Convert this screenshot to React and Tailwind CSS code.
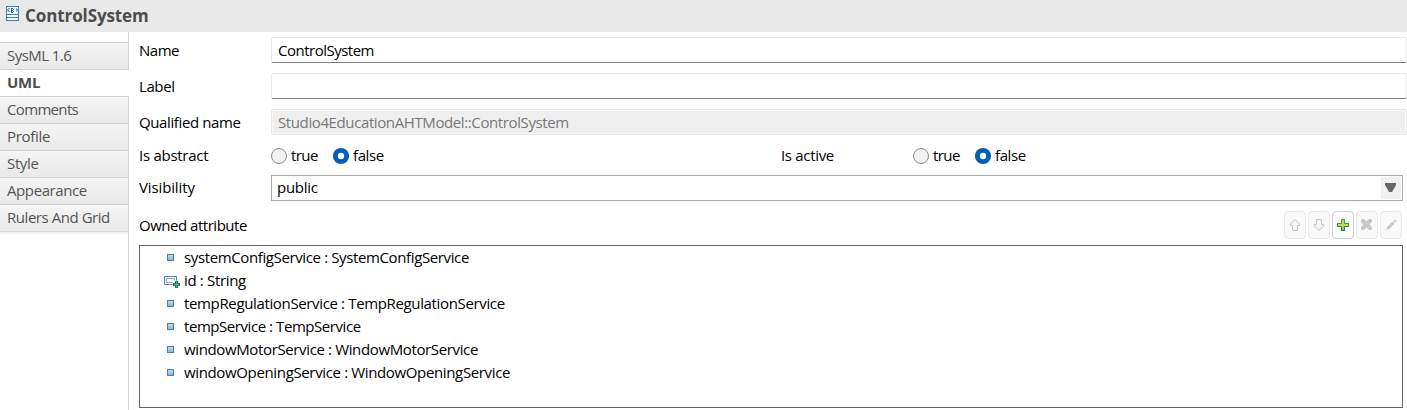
import React from "react";

const tabs = [
  { label: "SysML 1.6", track: "tracking-[-0.55px]" },
  { label: "UML", track: "tracking-[-0.3px]", active: true },
  { label: "Comments", track: "tracking-[-0.66px]" },
  { label: "Profile", track: "tracking-[-0.29px]" },
  { label: "Style", track: "tracking-[-0.35px]" },
  { label: "Appearance", track: "tracking-[-0.4px]" },
  { label: "Rulers And Grid", track: "tracking-[-0.45px]" },
];

const attributes = [
  { text: "systemConfigService : SystemConfigService", track: "tracking-[-0.376px]" },
  { text: "id : String", track: "tracking-[-0.34px]", property: true },
  { text: "tempRegulationService : TempRegulationService", track: "tracking-[-0.354px]" },
  { text: "tempService : TempService", track: "tracking-[-0.44px]" },
  { text: "windowMotorService : WindowMotorService", track: "tracking-[-0.365px]" },
  { text: "windowOpeningService : WindowOpeningService", track: "tracking-[-0.355px]" },
];

function BlockIcon() {
  return (
    <svg width="13" height="15" viewBox="0 0 13 15" shapeRendering="crispEdges">
      <rect x="0.5" y="0.5" width="12" height="14" fill="#f4f9fd" stroke="#3d80bb" />
      <path d="M1 8.5h11M1 11.5h11" stroke="#3d80bb" />
      <path d="M3.5 2.5h-1v1h-1v1h1v1h1M9.5 2.5h1v1h1v1h-1v1h-1" fill="none" stroke="#7aa9d2" />
      <path d="M5.5 2v5M5 2.5h2M5 4.5h2M5 6.5h2M7.5 3v1M7.5 5v1" stroke="#2468a8" />
    </svg>
  );
}

function SquareIcon() {
  return (
    <svg width="7" height="7" viewBox="0 0 7 7" shapeRendering="crispEdges">
      <defs>
        <linearGradient id="sq" x1="0" y1="0" x2="0" y2="1">
          <stop offset="0" stopColor="#c9dced" />
          <stop offset="1" stopColor="#86b0d6" />
        </linearGradient>
      </defs>
      <rect x="0.5" y="0.5" width="6" height="6" fill="url(#sq)" stroke="#4a7fae" />
    </svg>
  );
}

function PropertyIcon() {
  return (
    <svg width="16" height="13" viewBox="0 0 16 13">
      <path d="M8.500 8.500H0.5V0.5H12.5V4.500" fill="none" stroke="#4d86b6" />
      <path d="M8.500 6.500H2.500V2.500H10.500V4.500" fill="none" stroke="#7ba7cc" />
      <path d="M11 5h3v2h2v3h-2v2h-3v-2h-2v-3h2z" fill="#178048" />
      <path d="M12 6h1v2h2v1h-2v2h-1v-2h-2v-1h2z" fill="#56b97d" />
    </svg>
  );
}

function Radio({ label, checked, track }) {
  return (
    <div className="flex items-center gap-[3px]">
      <svg width="18" height="18" viewBox="0 0 18 18">
        {checked ? (
          <>
            <circle cx="9" cy="9" r="8.1" fill="#005fb8" />
            <circle cx="9" cy="9" r="3.2" fill="#fff" />
          </>
        ) : (
          <circle cx="9" cy="9" r="7.5" fill="#f3f3f3" stroke="#868686" />
        )}
      </svg>
      <span className={`block pb-[2px] ${track}`}>{label}</span>
    </div>
  );
}

function RadioPair() {
  return (
    <div className="flex">
      <div className="w-[62px]"><Radio label="true" track="tracking-[-0.6px]" /></div>
      <Radio label="false" checked track="tracking-[-0.4px]" />
    </div>
  );
}

function ToolButton({ enabled, children }) {
  return (
    <button className={`flex h-[28px] w-[22px] items-center justify-center rounded-[4px] border ${enabled ? "border-[#cfcfcf] bg-[#fdfdfd]" : "border-[#e8e8e8] bg-[#f9f9f9]"}`}>
      {children}
    </button>
  );
}

function Toolbar() {
  return (
    <div className="flex gap-[2px]">
      <ToolButton>
        <svg width="12" height="14" viewBox="0 0 12 14"><path d="M6 1.5L10.5 6V7.5H8.5V12.5H3.5V7.5H1.5V6Z" fill="#f7f7f7" stroke="#c4c4c4" /></svg>
      </ToolButton>
      <ToolButton>
        <svg width="12" height="14" viewBox="0 0 12 14"><path d="M6 12.5L10.5 8V6.5H8.5V1.5H3.5V6.5H1.5V8Z" fill="#f7f7f7" stroke="#c4c4c4" /></svg>
      </ToolButton>
      <ToolButton enabled>
        <svg width="12" height="12" viewBox="0 0 12 12" shapeRendering="crispEdges">
          <defs>
            <linearGradient id="plus" x1="0" y1="0" x2="0" y2="1">
              <stop offset="0" stopColor="#a5cf5a" /><stop offset="0.5" stopColor="#c8dc4f" /><stop offset="1" stopColor="#62b26a" />
            </linearGradient>
            <linearGradient id="plusEdge" x1="0" y1="0" x2="0" y2="1">
              <stop offset="0" stopColor="#62a63b" /><stop offset="1" stopColor="#277e55" />
            </linearGradient>
          </defs>
          <path d="M4.5 0.5H7.5V4.5H11.5V7.5H7.5V11.5H4.5V7.5H0.5V4.5H4.5Z" fill="url(#plus)" stroke="url(#plusEdge)" />
        </svg>
      </ToolButton>
      <ToolButton>
        <svg width="12" height="12" viewBox="0 0 12 12"><path d="M1 0H3L5.5 2.5L8 0H10L11 1V3L8.500 5.500L11 8V10L10 11H8L5.500 8.500L3 11H1L0 10V8L2.500 5.500L0 3V1Z" fill="#c8c8c8" /></svg>
      </ToolButton>
      <ToolButton>
        <svg width="12" height="12" viewBox="0 0 12 12"><path d="M2.3 9.8L8.6 3.5" stroke="#c8c8c8" strokeWidth="3" /><path d="M9.3 2.8L11 1.1" stroke="#cecece" strokeWidth="2.6" /><path d="M0.5 11.5L2 10" stroke="#cfcfcf" /></svg>
      </ToolButton>
    </div>
  );
}

function TextField({ label, value, track, valueTrack, readOnly }) {
  return (
    <div className="flex h-[26px] items-center">
      <div className={`w-[132px] shrink-0 ${track}`}>{label}</div>
      {readOnly ? (
        <div className="h-full grow rounded-[2px] border border-[#e8e8e8] bg-[#fafafa] p-px">
          <div className={`flex h-full items-center bg-[#efefef] pl-[5px] text-[#777] ${valueTrack}`}>{value}</div>
        </div>
      ) : (
        <div className={`flex h-full grow items-center rounded-[2px] border border-[#e9e9e9] border-b-[#808080] bg-white pl-[6px] ${valueTrack}`}>{value}</div>
      )}
    </div>
  );
}

export default function App() {
  return (
    <div className="flex h-[410px] w-[1407px] flex-col overflow-hidden bg-white font-['Open_Sans','Noto_Sans',sans-serif] text-[15px] leading-[20px] whitespace-nowrap text-black">
      <header className="flex h-[32px] shrink-0 items-start bg-[#e9e9e9] pl-[6px]">
        <div className="mt-[6px] w-[19px]"><BlockIcon /></div>
        <h1 className="mt-[4px] text-[17px] leading-[24px] font-bold tracking-[-0.1px] text-[#4d4d4d]">ControlSystem</h1>
      </header>
      <div className="flex min-h-0 grow">
        <nav className="flex w-[129px] shrink-0 flex-col text-[#555]">
          <div className="h-[10px] border-r border-[#d6d6d6]" />
          {tabs.map((t) => (
            <div
              key={t.label}
              className={`flex h-[27px] shrink-0 items-center border-t border-[#d2d2d2] pb-[2px] pl-[7px] ${t.track} ${t.active ? "bg-white font-bold text-[#4d4d4d]" : "border-r bg-linear-to-b from-[#f5f5f5] to-[#e9e9e9]"}`}
            >
              {t.label}
            </div>
          ))}
          <div className="grow border-t border-r border-[#d6d6d6]"><div className="h-[3px] bg-linear-to-b from-[#ececec] to-white" /></div>
        </nav>
        <main className="flex min-w-0 grow flex-col pt-[5px] pl-[10px]">
          <div className="flex flex-col gap-[10px]">
            <TextField label="Name" track="tracking-[-0.5px]" value="ControlSystem" valueTrack="tracking-[-0.5px]" />
            <TextField label="Label" track="tracking-[-0.4px]" value="" valueTrack="" />
            <TextField label="Qualified name" track="tracking-[-0.38px]" value="Studio4EducationAHTModel::ControlSystem" valueTrack="tracking-[-0.39px]" readOnly />
          </div>
          <div className="mt-[9px] flex h-[24px] items-center">
            <div className="w-[131px] pb-[2px] tracking-[-0.27px]">Is abstract</div>
            <div className="w-[511px]"><RadioPair /></div>
            <div className="w-[131px] pb-[2px] tracking-[-0.32px]">Is active</div>
            <RadioPair />
          </div>
          <div className="mt-[7px] flex h-[26px] items-center pr-[4px]">
            <div className="w-[132px] pb-[2px] tracking-[-0.13px]">Visibility</div>
            <div className="flex h-[26px] grow items-center justify-between border border-[#a9a9a9] pr-px pl-[5px]">
              <span className="block pb-[2px] tracking-[-0.3px]">public</span>
              <div className="flex h-[22px] w-[20px] items-center justify-center bg-[#f0f0f0] pr-px pb-px">
                <svg width="11" height="9" viewBox="0 0 11 9"><path d="M0 0H11V2L7 9H4L0 2Z" fill="#666" /></svg>
              </div>
            </div>
          </div>
          <div className="mt-[10px] flex h-[28px] items-center justify-between pr-[5px]">
            <div className="pb-px tracking-[-0.48px]">Owned attribute</div>
            <Toolbar />
          </div>
          <div className="mt-[6px] mr-[4px] flex h-[163px] flex-col border border-[#646464]">
            {attributes.map((a) => (
              <div key={a.text} className="flex h-[23px] items-center">
                <div className={`flex w-[44px] shrink-0 ${a.property ? "pt-[3px] pl-[24px]" : "pl-[27px]"}`}>
                  {a.property ? <PropertyIcon /> : <SquareIcon />}
                </div>
                <span className={`block pb-[2px] ${a.track}`}>{a.text}</span>
              </div>
            ))}
          </div>
        </main>
      </div>
    </div>
  );
}
